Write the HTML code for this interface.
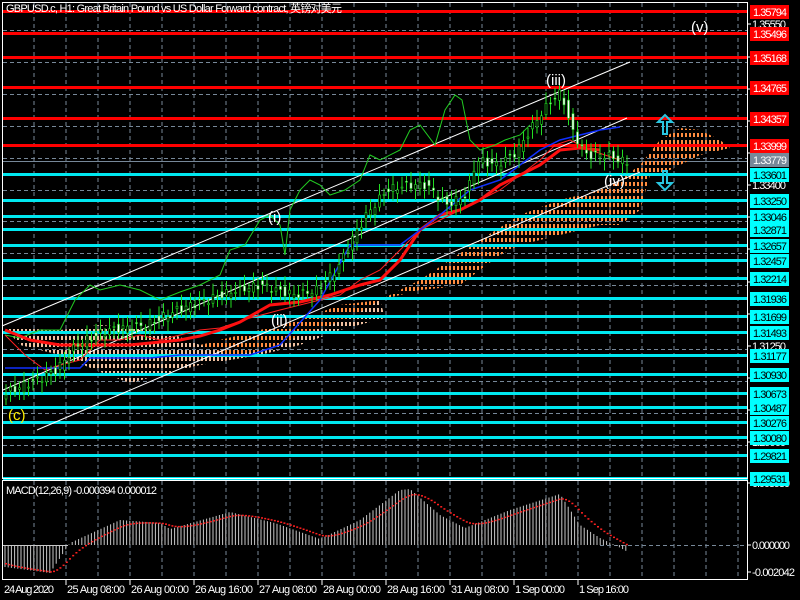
<!DOCTYPE html>
<html><head><meta charset="utf-8"><style>
html,body{margin:0;padding:0;background:#000;width:800px;height:600px;overflow:hidden}
svg{display:block}
text{font-family:"Liberation Sans","Noto Sans CJK SC",sans-serif;font-size:11px}
</style></head><body>
<svg id="s" width="800" height="600" xmlns="http://www.w3.org/2000/svg">
<defs>
<pattern id="cl" width="4" height="7" patternUnits="userSpaceOnUse"><rect x="1" y="0" width="2" height="4" fill="#ff8c40"/></pattern>
<pattern id="cw" width="4" height="7" patternUnits="userSpaceOnUse"><rect x="1" y="0" width="2" height="4" fill="#f0c0a0"/></pattern>
</defs>
<rect width="800" height="600" fill="#000"/>
<g id="grid"></g>
<g id="cloud">
<polygon points="5,328 60,330 100,325 140,328 175,335 200,345 240,340 280,330 320,320 360,308 380,300 385,318 340,330 300,345 260,355 200,365 160,375 130,383 100,372 60,355 20,345" fill="url(#cw)"/>
<polygon points="200,345 260,330 300,320 340,305 380,300 420,280 450,260 480,240 520,215 560,200 600,190 620,180 640,165 660,140 680,128 700,130 720,140 730,148 700,155 690,160 670,170 650,175 640,210 620,225 600,225 580,230 560,235 540,240 520,245 500,255 480,270 460,285 440,288 420,290 400,295 380,300 350,318 300,335 270,350 230,355" fill="url(#cl)"/>
</g>
<g id="hl"></g>
<g fill="none">
<line x1="2" y1="326" x2="630" y2="62" stroke="#fff" stroke-width="1"/>
<line x1="3" y1="390" x2="627" y2="118" stroke="#fff" stroke-width="1"/>
<line x1="37" y1="430" x2="640" y2="172" stroke="#fff" stroke-width="1"/>
<polyline stroke="#22cc22" stroke-width="1" points="5,335 20,338 40,330 60,330 75,300 90,285 100,290 120,285 140,290 160,300 180,292 200,285 220,275 230,250 245,245 260,220 270,215 280,225 285,255 290,210 300,190 310,180 320,185 330,195 345,190 360,180 370,155 380,160 400,150 410,130 420,125 435,145 445,110 455,95 462,100 470,140 480,150 495,145 505,140 520,135 530,125"/>
<polyline stroke="#ff2020" stroke-width="1" points="5,335 25,355 45,370 60,365 80,360 100,340 120,340 140,335 160,340 180,335 200,330 220,328 250,318 280,310 300,305 320,300 340,295 360,280 380,270 400,250 420,230 440,220 460,210 480,200 500,190 520,175 540,160 555,145 570,140 590,150 605,155 620,160"/>
<polyline stroke="#ff1010" stroke-width="3" points="5,330 30,340 60,345 100,345 130,345 160,342 180,340 200,336 220,330 240,322 270,305 300,302 330,295 360,285 380,280 400,260 420,230 440,215 460,210 480,200 500,185 520,175 540,165 560,150 580,148 600,150"/>
<polyline stroke="#1030ff" stroke-width="1.5" points="5,368 30,368 60,368 80,368 90,358 150,358 180,355 210,355 250,355 280,345 320,300 350,245 400,245 420,230 440,215 470,190 500,180 520,165 540,150 560,140 580,135 600,130 620,127"/>
<g id="cd"></g>
</g>
<g id="macd"></g>
<rect x="2.5" y="2.5" width="745" height="476" fill="none" stroke="#fff"/>
<rect x="2.5" y="480.5" width="745" height="99" fill="none" stroke="#fff"/>
<text x="6" y="12" fill="#fff" textLength="336">GBPUSD.c, H1:  Great Britain Pound vs US Dollar Forward contract, 英镑对美元</text>
<text x="6" y="494" fill="#fff" textLength="151">MACD(12,26,9) -0.000394 0.000012</text>
<g fill="#fff">
<text x="691" y="32" style="font-size:15px">(v)</text>
<text x="546" y="85" style="font-size:15px">(iii)</text>
<text x="268" y="222" style="font-size:15px">(i)</text>
<text x="271" y="325" style="font-size:15px">(ii)</text>
<text x="604" y="186" style="font-size:15px">(iv)</text>
</g>
<text x="8" y="420" fill="#ffee00" style="font-size:15px">(c)</text>
<g fill="none" stroke="#29c6e0" stroke-width="2">
<path d="M663,134 V122 H658 L665,115 L672,122 H667 V134 Z"/>
<path d="M663,171 V183 H658 L665,190 L672,183 H667 V171 Z"/>
</g>
<g id="lab"></g>
</svg>
<script>
var NS="http://www.w3.org/2000/svg";
function el(p,t,a,txt){var e=document.createElementNS(NS,t);for(var k in a)e.setAttribute(k,a[k]);if(txt!=null)e.textContent=txt;document.getElementById(p).appendChild(e);return e;}
for(var x=34;x<747;x+=32){el("grid","line",{x1:x,y1:3,x2:x,y2:478,stroke:"#778899","stroke-dasharray":"4,3"});el("grid","line",{x1:x,y1:481,x2:x,y2:579,stroke:"#778899","stroke-dasharray":"4,3"});}
for(var y=30;y<478;y+=31.9){el("grid","line",{x1:3,y1:Math.round(y)+.5,x2:747,y2:Math.round(y)+.5,stroke:"#778899","stroke-dasharray":"4,3"});}
el("grid","line",{x1:3,y1:161.5,x2:747,y2:161.5,stroke:"#778899"});
el("grid","line",{x1:600,y1:545.5,x2:747,y2:545.5,stroke:"#778899","stroke-dasharray":"4,3"});
var red=[[11,"1.35794"],[33,"1.35496"],[57,"1.35168"],[87,"1.34765"],[118,"1.34357"],[145,"1.33999"]];
var cy=[[174,"1.33601"],[200,"1.33250"],[216,"1.33046"],[229,"1.32871"],[245,"1.32657"],[260,"1.32457"],[278,"1.32214"],[298,"1.31936"],[316,"1.31699"],[332,"1.31493"],[355,"1.31177"],[374,"1.30930"],[393,"1.30673"],[407,"1.30487"],[422,"1.30276"],[437,"1.30080"],[455,"1.29821"],[478,"1.29531"]];
var wl=[[28,"1.35550"],[61,"1.35120"],[93,"1.34690"],[125,"1.34260"],[157,"1.33830"],[189,"1.33400"],[221,"1.32970"],[253,"1.32540"],[286,"1.32110"],[318,"1.31680"],[350,"1.31250"],[382,"1.30820"],[414,"1.30390"],[446,"1.29960"],[487,"0.003930"],[549,"0.000000"],[576,"-0.002042"]];
wl.forEach(function(l){el("lab","line",{x1:747,y1:l[0]-4,x2:751,y2:l[0]-4,stroke:"#fff"});el("lab","text",{x:752,y:l[0],fill:"#fff",textLength:l[1].length>7?(l[1].length>8?43:38):34},l[1]);});
red.forEach(function(l){el("hl","rect",{x:3,y:l[0]-1,width:745,height:3,fill:"#ff0000"});el("lab","rect",{x:750,y:l[0]-6,width:39,height:14,fill:"#ff0000"});el("lab","text",{x:753,y:l[0]+5,fill:"#fff",textLength:34},l[1]);});
cy.forEach(function(l){el("hl","rect",{x:3,y:l[0]-1,width:745,height:3,fill:"#00e8f0"});el("lab","rect",{x:750,y:l[0]-6,width:39,height:14,fill:"#00ffff"});el("lab","text",{x:753,y:l[0]+5,fill:"#000",textLength:34},l[1]);});
el("lab","rect",{x:750,y:153,width:39,height:14,fill:"#778899"});el("lab","text",{x:753,y:164,fill:"#fff",textLength:34},"1.33779");
var pts=[[5,395],[40,380],[60,370],[80,345],[110,330],[150,325],[180,310],[210,300],[240,290],[265,285],[280,290],[300,295],[320,290],[340,270],[355,240],[370,215],[390,190],[410,185],[430,185],[450,205],[470,195],[480,160],[500,165],[520,152],[540,120],[555,100],[565,92],[575,130],[590,155],[610,155],[628,162]];
function py(x){for(var i=1;i<pts.length;i++){if(x<=pts[i][0]){var a=pts[i-1],b=pts[i];return a[1]+(b[1]-a[1])*(x-a[0])/(b[0]-a[0]);}}return 162;}
for(var x=5;x<628;x+=4.5){var c=py(x),n=py(x+4.5),o=c+(Math.sin(x*1.7)*5),cl=n+(Math.cos(x*2.3)*4);var t=Math.min(o,cl),b=Math.max(o,cl);el("cd","line",{x1:x+1,y1:t-4-Math.abs(Math.sin(x))*7,x2:x+1,y2:b+4+Math.abs(Math.cos(x))*7,stroke:"#22dd22"});el("cd","rect",{x:x,y:t,width:2,height:Math.max(1,b-t),fill:o>cl?"#000":"#fff",stroke:"#22dd22","stroke-width":.6});}
var mk=[[5,22],[50,28],[70,-2],[120,-25],[160,-22],[170,-16],[230,-33],[275,-22],[320,-6],[360,-25],[400,-55],[410,-56],[440,-30],[465,-17],[510,-35],[560,-51],[580,-20],[600,-7],[615,0],[628,7]];
function mv(x){for(var i=1;i<mk.length;i++){if(x<=mk[i][0]){var a=mk[i-1],b=mk[i];return a[1]+(b[1]-a[1])*(x-a[0])/(b[0]-a[0]);}}return 7;}
var s=mv(5)-5;
for(var x=5;x<=628;x+=3.2){var v=mv(x);el("macd","line",{x1:x,y1:545,x2:x,y2:545+v,stroke:"#c8c8c8"});s=s+(v-s)*0.2;el("macd","rect",{x:x,y:545+s,width:2,height:1.5,fill:"#ff2020"});}
el("macd","line",{x1:3,y1:545.5,x2:68,y2:545.5,stroke:"#c8c8c8"});
var d=[[2,"24 Aug 2020"],[65,"25 Aug 08:00"],[129,"26 Aug 00:00"],[193,"26 Aug 16:00"],[257,"27 Aug 08:00"],[321,"28 Aug 00:00"],[385,"28 Aug 16:00"],[449,"31 Aug 08:00"],[513,"1 Sep 00:00"],[577,"1 Sep 16:00"]];
d.forEach(function(q){if(q[0]>2)el("lab","line",{x1:q[0]+1,y1:580,x2:q[0]+1,y2:585,stroke:"#fff"});el("lab","text",{x:q[0]+2,y:593,fill:"#fff",textLength:q[1].length>11?58:50},q[1]);});
</script>
</body></html>
